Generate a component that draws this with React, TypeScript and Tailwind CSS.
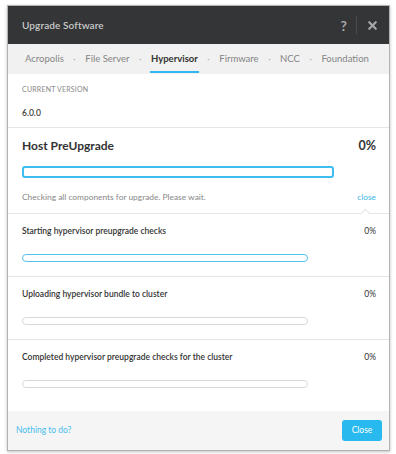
import { X } from "lucide-react";

const tabs = ["Acropolis", "File Server", "Hypervisor", "Firmware", "NCC", "Foundation"];

const steps = [
  { label: "Starting hypervisor preupgrade checks", active: true },
  { label: "Uploading hypervisor bundle to cluster", active: false },
  { label: "Completed hypervisor preupgrade checks for the cluster", active: false },
];

function Step({ label, active, caret }: { label: string; active: boolean; caret?: boolean }) {
  return (
    <div className="relative h-[63px] border-t border-[#e6e6e6] pl-[14px] pr-[13px] pt-[11px]">
      {caret && (
        <span className="absolute -top-[4px] right-[20px] h-[7px] w-[7px] rotate-45 border-l border-t border-[#e6e6e6] bg-white" />
      )}
      <div className="flex items-center justify-between text-[8.5px] leading-[12px] text-[#333]">
        <span className="font-semibold">{label}</span>
        <span>0%</span>
      </div>
      <div
        className={`mt-[17px] h-[8px] w-[286px] rounded-[4px] border ${
          active ? "border-[#55c3f0]" : "border-[#d9d9d9]"
        }`}
      />
    </div>
  );
}

export default function App() {
  return (
    <div className="h-[454px] w-[396px] bg-white pl-[7px] pt-[5px] font-['Lato',sans-serif]">
      <div className="w-[383px] border border-[#b3b3b3] bg-white shadow-[0_1px_3px_rgba(0,0,0,0.25)]">
        <div className="flex h-[38px] items-center justify-between bg-[#333537] pl-[14px] pr-[10px]">
          <span className="text-[10px] font-semibold tracking-[0.1px] text-[#c9c9c9]">Upgrade Software</span>
          <div className="flex items-center">
            <span className="text-[14px] font-bold text-[#a8a8a8]">?</span>
            <span className="mx-[9px] h-[18px] w-px bg-[#4a4c4e]" />
            <X className="h-[13px] w-[13px] text-[#a8a8a8]" strokeWidth={4} />
          </div>
        </div>

        <div className="flex h-[30px] items-center gap-[9.5px] bg-[#f1f1f1] pl-[17px] text-[9.5px] text-[#858585]">
          {tabs.map((t, i) => (
            <div key={t} className="flex h-full items-center gap-[9.5px]">
              {i > 0 && <span className="text-[#b0b0b0]">·</span>}
              <span
                className={`relative flex h-full items-center ${
                  t === "Hypervisor" ? "font-bold text-[#333]" : ""
                }`}
              >
                {t}
                {t === "Hypervisor" && (
                  <span className="absolute bottom-[1px] -left-[1px] -right-[1px] h-[2px] bg-[#2fb8ef]" />
                )}
              </span>
            </div>
          ))}
        </div>

        <div className="h-[53px] px-[14px] pt-[10px]">
          <div className="text-[7px] uppercase leading-[10px] tracking-[0.2px] text-[#888]">Current Version</div>
          <div className="mt-[13px] text-[8.5px] font-semibold leading-[12px] text-[#444]">6.0.0</div>
        </div>

        <div className="h-[86px] border-t border-[#e6e6e6] pl-[14px] pr-[13px] pt-[9px]">
          <div className="flex items-center justify-between text-[12px] font-bold leading-[18px] text-[#333]">
            <span>Host PreUpgrade</span>
            <span className="text-[12.5px]">0%</span>
          </div>
          <div className="mt-[11px] h-[12px] w-[312px] rounded-[3px] border-2 border-[#3dbdf0]" />
          <div className="mt-[13px] flex items-center justify-between text-[8.4px] leading-[12px]">
            <span className="text-[#888]">Checking all components for upgrade. Please wait.</span>
            <span className="text-[#3ab5e8]">close</span>
          </div>
        </div>

        {steps.map((s, i) => (
          <Step key={s.label} label={s.label} active={s.active} caret={i === 0} />
        ))}

        <div className="h-[9px]" />

        <div className="flex h-[39px] items-center justify-between bg-[#f5f5f5] pl-[8px] pr-[7px]">
          <span className="text-[8.5px] text-[#48bdec]">Nothing to do?</span>
          <button
            type="button"
            className="h-[21px] w-[40px] rounded-[3px] bg-[#28b9ef] text-[8.5px] text-white"
          >
            Close
          </button>
        </div>
      </div>
    </div>
  );
}
